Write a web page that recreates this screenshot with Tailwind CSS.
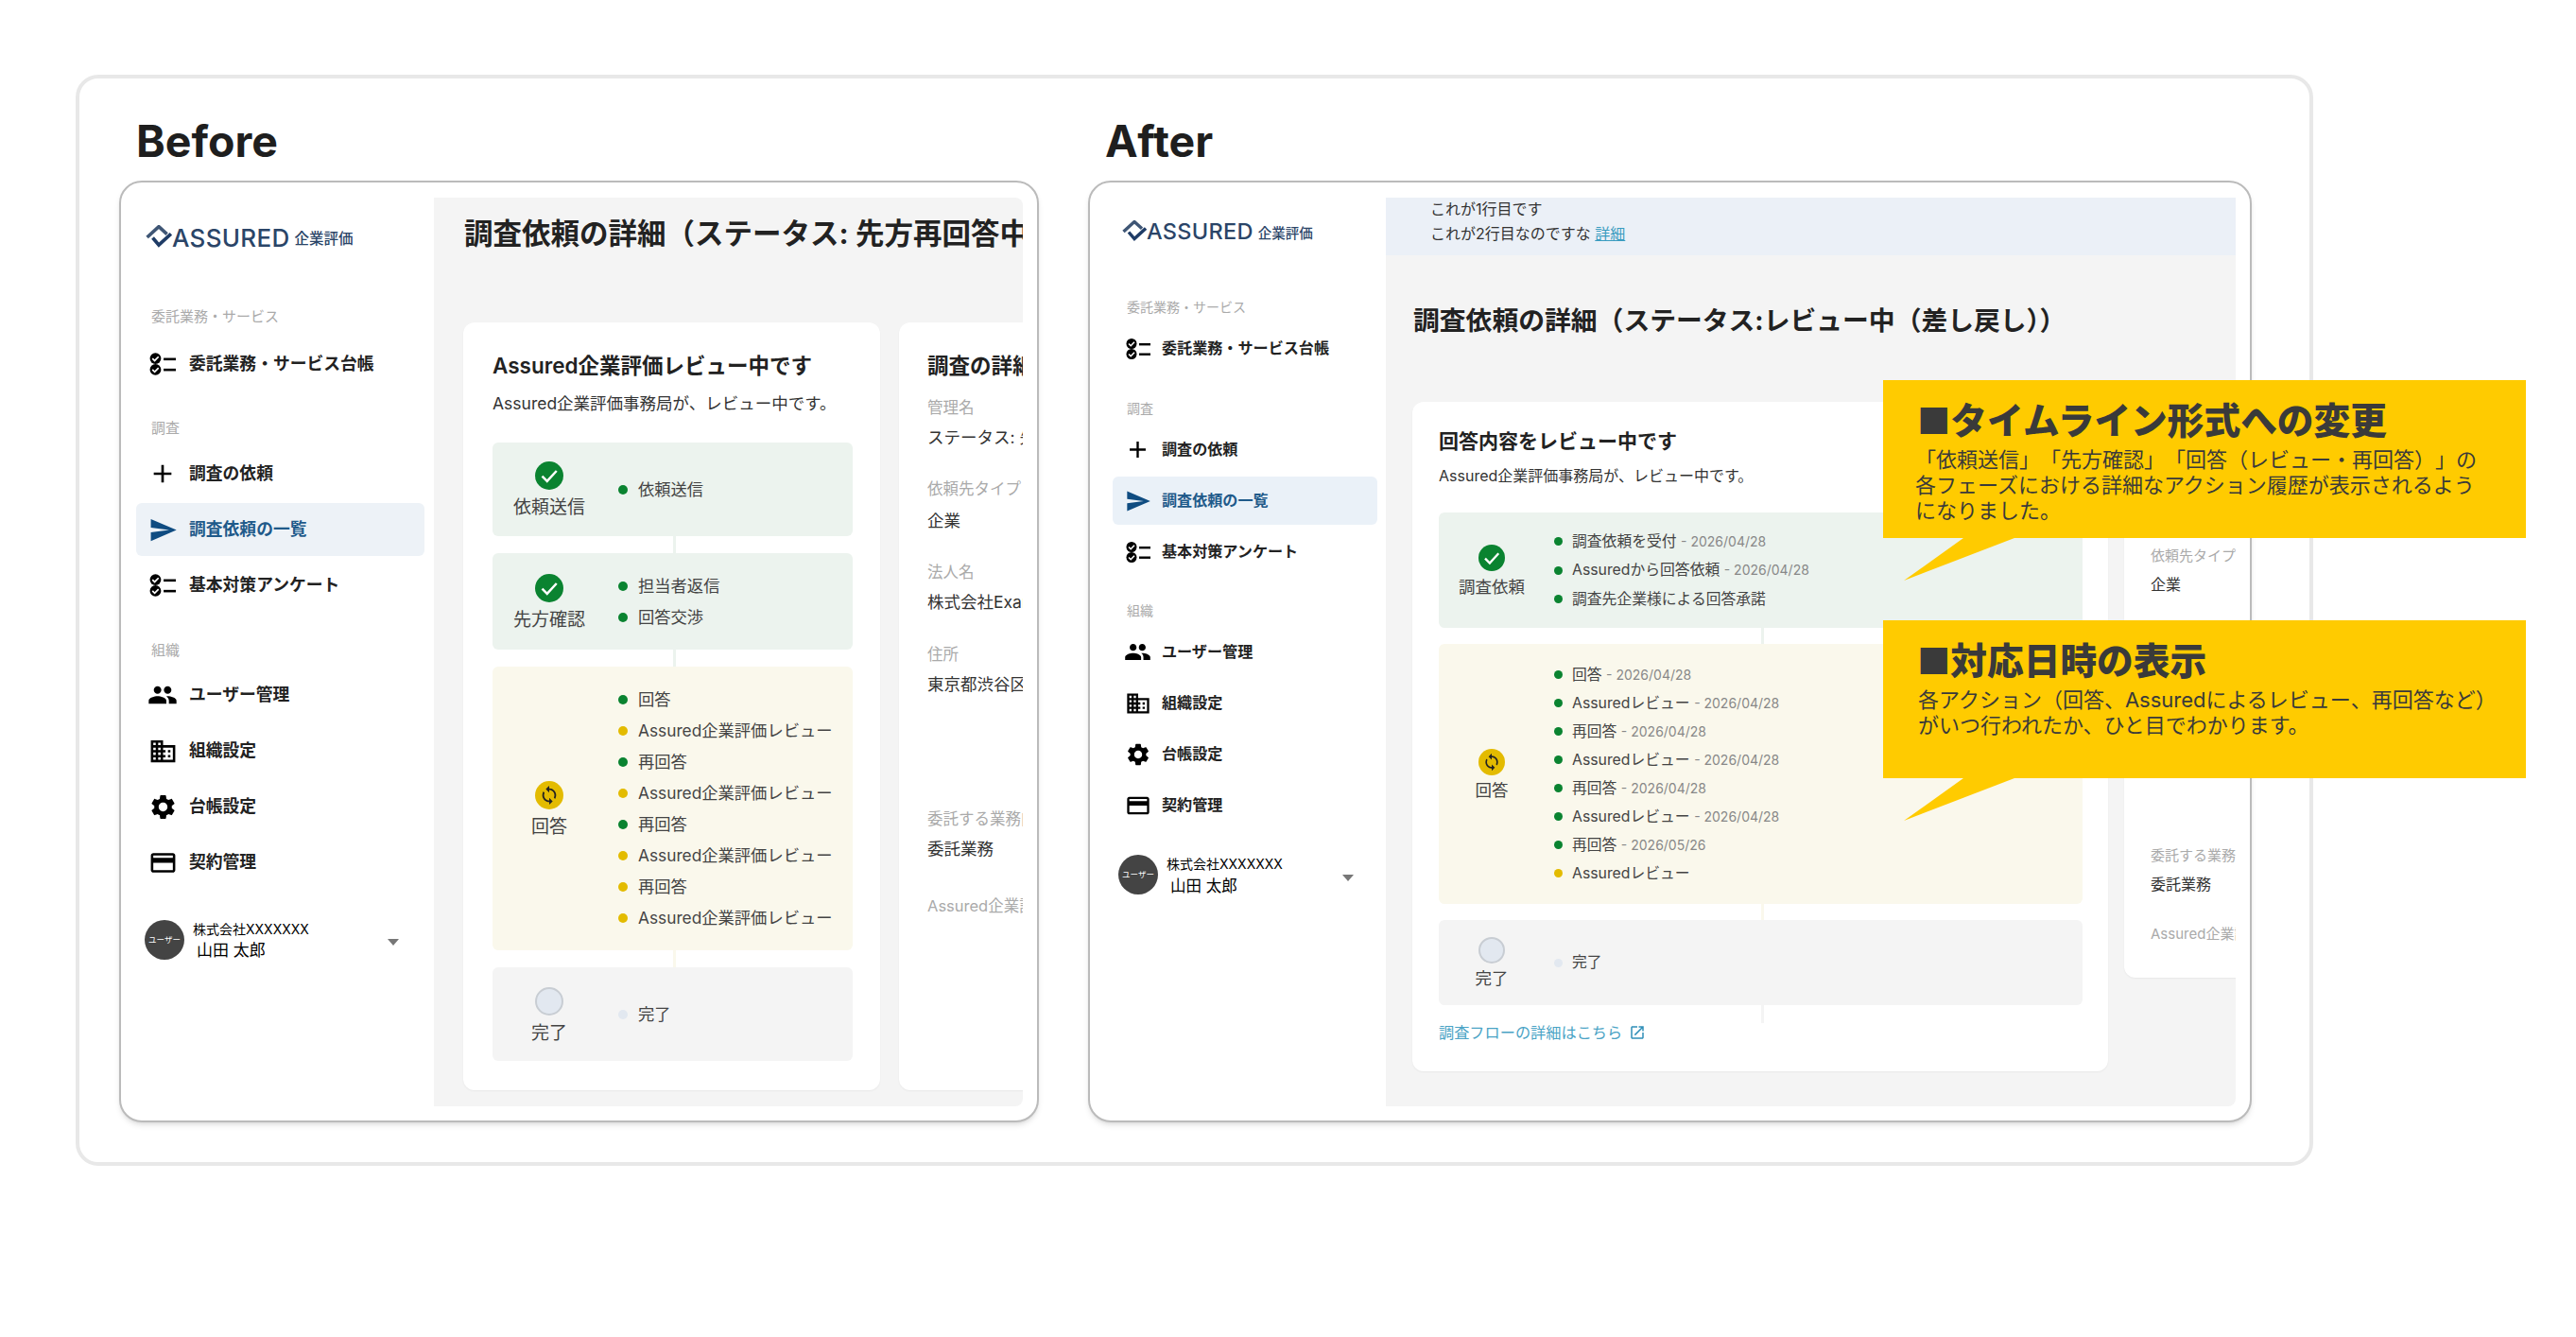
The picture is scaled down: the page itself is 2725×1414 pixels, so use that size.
<!DOCTYPE html>
<html lang="ja">
<head>
    <meta charset="UTF-8">
    <title>Before / After</title>
    <script src="https://cdn.jsdelivr.net/npm/@tailwindcss/browser@4"></script>
</head>
<body class="bg-white">
    <svg class="hidden">
        <symbol id="i-list" viewBox="0 0 26 24"><circle cx="6" cy="6.500" r="5.500"/><circle cx="6" cy="17.500" r="5.500"/><path d="M3 6.500l2.200 2.200L9 4.800M3 17.500l2.200 2.200L9 15.800" fill="none" stroke="#fff" stroke-width="1.600"/><rect x="14" y="6" width="12" height="2.400"/><rect x="14" y="16.500" width="12" height="2.400"/></symbol>
        <symbol id="i-add" viewBox="0 0 24 24"><path d="M19 13h-6v6h-2v-6H5v-2h6V5h2v6h6v2z"/></symbol>
        <symbol id="i-send" viewBox="0 0 24 24"><path d="M2.010 21 23 12 2.010 3 2 10l15 2-15 2z"/></symbol>
        <symbol id="i-people" viewBox="0 0 24 24"><path d="M16 11c1.660 0 2.990-1.340 2.990-3S17.660 5 16 5c-1.660 0-3 1.340-3 3s1.340 3 3 3zm-8 0c1.660 0 2.990-1.340 2.990-3S9.660 5 8 5C6.340 5 5 6.340 5 8s1.340 3 3 3zm0 2c-2.330 0-7 1.170-7 3.500V19h14v-2.500c0-2.330-4.670-3.500-7-3.500zm8 0c-.29 0-.62.02-.97.05 1.160.84 1.970 1.970 1.970 3.450V19h6v-2.500c0-2.330-4.670-3.500-7-3.500z"/></symbol>
        <symbol id="i-domain" viewBox="0 0 24 24"><path d="M12 7V3H2v18h20V7H12zM6 19H4v-2h2v2zm0-4H4v-2h2v2zm0-4H4V9h2v2zm0-4H4V5h2v2zm4 12H8v-2h2v2zm0-4H8v-2h2v2zm0-4H8V9h2v2zm0-4H8V5h2v2zm10 12h-8v-2h2v-2h-2v-2h2v-2h-2V9h8v10zm-2-8h-2v2h2v-2zm0 4h-2v2h2v-2z"/></symbol>
        <symbol id="i-gear" viewBox="0 0 24 24"><path d="M19.140 12.940c.04-.3.06-.61.06-.94 0-.32-.02-.64-.07-.94l2.030-1.580c.18-.14.23-.41.12-.61l-1.920-3.320c-.12-.22-.37-.29-.59-.22l-2.390.96c-.5-.38-1.030-.7-1.620-.94l-.36-2.540c-.04-.24-.24-.41-.48-.41h-3.840c-.24 0-.43.17-.47.41l-.36 2.540c-.59.24-1.130.57-1.620.94l-2.390-.96c-.22-.08-.47 0-.59.22L2.740 8.870c-.12.21-.08.47.12.61l2.030 1.580c-.05.3-.09.63-.09.94s.02.64.07.94l-2.030 1.580c-.18.14-.23.41-.12.61l1.920 3.320c.12.22.37.29.59.22l2.390-.96c.5.38 1.030.7 1.620.94l.36 2.540c.05.24.24.41.48.41h3.840c.24 0 .44-.17.47-.41l.36-2.540c.59-.24 1.130-.56 1.620-.94l2.390.96c.22.08.47 0 .59-.22l1.920-3.320c.12-.22.07-.47-.12-.61l-2.010-1.580zM12 15.600c-1.980 0-3.600-1.620-3.600-3.600s1.620-3.600 3.600-3.600 3.600 1.620 3.600 3.600-1.620 3.600-3.600 3.600z"/></symbol>
        <symbol id="i-card" viewBox="0 0 24 24"><path d="M20 4H4c-1.110 0-1.990.89-1.990 2L2 18c0 1.110.89 2 2 2h16c1.110 0 2-.89 2-2V6c0-1.110-.89-2-2-2zm0 14H4v-6h16v6zm0-10H4V6h16v2z"/></symbol>
        <symbol id="i-sync" viewBox="0 0 24 24"><path d="M12 4V1L8 5l4 4V6c3.310 0 6 2.690 6 6 0 1.010-.25 1.970-.7 2.800l1.460 1.460C19.540 15.030 20 13.570 20 12c0-4.420-3.580-8-8-8zm0 14c-3.310 0-6-2.690-6-6 0-1.010.25-1.970.7-2.800L5.240 7.740C4.460 8.970 4 10.430 4 12c0 4.420 3.580 8 8 8v3l4-4-4-4v3z"/></symbol>
        <symbol id="i-check" viewBox="0 0 24 24"><path d="M6 12.500l4.200 4.200L18.200 8" fill="none" stroke="#fff" stroke-width="2"/></symbol>
        <symbol id="i-open" viewBox="0 0 24 24"><path d="M19 19H5V5h7V3H5c-1.110 0-2 .9-2 2v14c0 1.100.89 2 2 2h14c1.100 0 2-.9 2-2v-7h-2v7zM14 3v2h3.590l-9.830 9.830 1.410 1.410L19 6.410V10h2V3h-7z"/></symbol>
        <symbol id="i-logo" viewBox="0 0 26 24"><path d="M1.500 12 13 1.500l8 7.300" fill="none" stroke="#3f5675" stroke-width="3.400"/><path d="M7 12.500l6 7L25 8.500" fill="none" stroke="#1f3c66" stroke-width="3.400"/></symbol>
    </svg>

    <div class="relative w-[2725px] h-[1414px] overflow-hidden pt-[79px] pl-[80px] [font-family:Inter,'Noto_Sans_CJK_JP',sans-serif]">
        <!-- Outer frame -->
        <div class="flex gap-[52px] w-[2367px] h-[1154px] pl-[42px] border-4 border-[#e8e8e8] rounded-[24px]">

            <!-- Before -->
            <div class="w-[973px] shrink-0">
                <div class="h-[108px] pt-[25px] pl-[18px] flex items-center text-[46.500px] font-bold text-[#1e1e1e]">Before</div>
                <div class="flex w-[973px] h-[996px] bg-white border-2 border-[#bbbbbb] rounded-[24px] shadow-md">
                    <!-- Sidebar -->
                    <div class="w-[331px] shrink-0">
                        <div class="h-[120px] pb-[4px] pl-[26px] flex items-center text-[#2b4568]">
                            <svg class="w-[28px] h-[26px]"><use href="#i-logo"/></svg>
                            <span class="text-[26px] font-medium tracking-[0.300px]">ASSURED</span>
                            <span class="ml-[5px] mt-[3px] text-[15.500px] font-medium">企業評価</span>
                        </div>
                        <div class="h-[44px] pl-[32px] flex items-center text-[15px] text-[#aaaaaa]">委託業務・サービス</div>
                        <div class="ml-[16px] w-[305px] h-[56px] pl-[15px] flex items-center gap-[15px] rounded-md text-[17.800px] font-semibold text-[#222222]">
                            <span class="w-[26px] flex justify-center"><svg class="w-[28px] h-[28px] shrink-0 fill-black"><use href="#i-list"/></svg></span>委託業務・サービス台帳
                        </div>
                        <div class="h-[60px] pt-[20px] pl-[32px] flex items-center text-[15px] text-[#aaaaaa]">調査</div>
                        <div class="flex flex-col gap-[3px] ml-[16px] w-[305px] text-[17.800px] font-semibold text-[#222222]">
                            <div class="h-[56px] pl-[15px] flex items-center gap-[15px] rounded-md">
                                <span class="w-[26px] flex justify-center"><svg class="w-[32px] h-[32px] shrink-0 fill-black"><use href="#i-add"/></svg></span>調査の依頼
                            </div>
                            <div class="h-[56px] pl-[15px] flex items-center gap-[15px] rounded-md bg-[#edf2f7] text-[#1f5a8a]">
                                <span class="w-[26px] flex justify-center"><svg class="w-[31px] h-[31px] shrink-0 fill-[#0f4c81]"><use href="#i-send"/></svg></span>調査依頼の一覧
                            </div>
                            <div class="h-[56px] pl-[15px] flex items-center gap-[15px] rounded-md">
                                <span class="w-[26px] flex justify-center"><svg class="w-[28px] h-[28px] shrink-0 fill-black"><use href="#i-list"/></svg></span>基本対策アンケート
                            </div>
                        </div>
                        <div class="h-[60px] pt-[22px] pl-[32px] flex items-center text-[15px] text-[#aaaaaa]">組織</div>
                        <div class="flex flex-col gap-[3px] ml-[16px] w-[305px] text-[17.800px] font-semibold text-[#222222]">
                            <div class="h-[56px] pl-[15px] flex items-center gap-[15px]">
                                <span class="w-[26px] flex justify-center"><svg class="w-[32px] h-[32px] shrink-0 fill-black"><use href="#i-people"/></svg></span>ユーザー管理
                            </div>
                            <div class="h-[56px] pl-[15px] flex items-center gap-[15px]">
                                <span class="w-[26px] flex justify-center"><svg class="w-[31px] h-[31px] shrink-0 fill-black"><use href="#i-domain"/></svg></span>組織設定
                            </div>
                            <div class="h-[56px] pl-[15px] flex items-center gap-[15px]">
                                <span class="w-[26px] flex justify-center"><svg class="w-[31px] h-[31px] shrink-0 fill-black"><use href="#i-gear"/></svg></span>台帳設定
                            </div>
                            <div class="h-[56px] pl-[15px] flex items-center gap-[15px]">
                                <span class="w-[26px] flex justify-center"><svg class="w-[31px] h-[31px] shrink-0 fill-black"><use href="#i-card"/></svg></span>契約管理
                            </div>
                        </div>
                        <div class="mt-[24px] h-[60px] pl-[25px] flex items-center">
                            <div class="w-[42px] h-[42px] shrink-0 rounded-full bg-[#444444] flex items-center justify-center text-[8.500px] text-white">ユーザー</div>
                            <div class="w-[206px] ml-[9px] text-black">
                                <div class="h-[24px] flex items-center text-[14px]">株式会社XXXXXXX</div>
                                <div class="h-[24px] pl-[4px] flex items-center text-[17px]">山田 太郎</div>
                            </div>
                            <div class="w-0 h-0 mt-[4px] border-x-[6px] border-x-transparent border-t-[7px] border-t-[#777777]"></div>
                        </div>
                    </div>
                    <!-- Main -->
                    <div class="mt-[16px] mb-[15px] w-[623px] shrink-0 bg-[#f4f4f4] rounded-tr-lg rounded-br-lg overflow-hidden whitespace-nowrap">
                        <div class="h-[76px] pl-[32px] flex items-center text-[30.500px] font-bold text-[#222222]">調査依頼の詳細（ステータス: 先方再回答中</div>
                        <div class="mt-[56px] pl-[31px] flex gap-[20px]">
                            <div class="w-[441px] h-[812px] shrink-0 bg-white rounded-xl shadow-xs px-[31px] pt-[30px]">
                                <div class="h-[32px] flex items-center text-[22.500px] font-semibold text-[#222222]">Assured企業評価レビュー中です</div>
                                <div class="mt-[8px] h-[32px] flex items-center text-[17.500px] text-[#333333]">Assured企業評価事務局が、レビュー中です。</div>
                                <div class="mt-[25px] w-[381px] text-[17.300px] text-[#444444]">
                                    <div class="h-[99px] flex bg-[#ecf3ee] rounded-md">
                                        <div class="w-[120px] pt-[20px] flex flex-col items-center">
                                            <svg class="w-[30px] h-[30px] rounded-full bg-[#0a8330]"><use href="#i-check"/></svg>
                                            <div class="mt-[6px] h-[26px] flex items-center text-[19px]">依頼送信</div>
                                        </div>
                                        <div class="ml-[13px] flex flex-col justify-center">
                                            <div class="h-[33px] flex items-center gap-[11px]"><span class="w-[10px] h-[10px] rounded-full bg-[#0a8330]"></span>依頼送信</div>
                                        </div>
                                    </div>
                                    <div class="ml-[191px] w-[3px] h-[18px] bg-[#ecf3ee]"></div>
                                    <div class="h-[102px] flex bg-[#ecf3ee] rounded-md">
                                        <div class="w-[120px] pt-[22px] flex flex-col items-center">
                                            <svg class="w-[30px] h-[30px] rounded-full bg-[#0a8330]"><use href="#i-check"/></svg>
                                            <div class="mt-[6px] h-[26px] flex items-center text-[19px]">先方確認</div>
                                        </div>
                                        <div class="ml-[13px] flex flex-col justify-center">
                                            <div class="h-[33px] flex items-center gap-[11px]"><span class="w-[10px] h-[10px] rounded-full bg-[#0a8330]"></span>担当者返信</div>
                                            <div class="h-[33px] flex items-center gap-[11px]"><span class="w-[10px] h-[10px] rounded-full bg-[#0a8330]"></span>回答交渉</div>
                                        </div>
                                    </div>
                                    <div class="ml-[191px] w-[3px] h-[18px] bg-[#ecf3ee]"></div>
                                    <div class="h-[300px] flex bg-[#faf8ec] rounded-md">
                                        <div class="w-[120px] pt-[121px] flex flex-col items-center">
                                            <svg class="w-[30px] h-[30px] p-[4px] rounded-full bg-[#e3bb00] fill-[#222222]"><use href="#i-sync"/></svg>
                                            <div class="mt-[6px] h-[26px] flex items-center text-[19px]">回答</div>
                                        </div>
                                        <div class="ml-[13px] flex flex-col justify-center">
                                            <div class="h-[33px] flex items-center gap-[11px]"><span class="w-[10px] h-[10px] rounded-full bg-[#0a8330]"></span>回答</div>
                                            <div class="h-[33px] flex items-center gap-[11px]"><span class="w-[10px] h-[10px] rounded-full bg-[#e3bb00]"></span>Assured企業評価レビュー</div>
                                            <div class="h-[33px] flex items-center gap-[11px]"><span class="w-[10px] h-[10px] rounded-full bg-[#0a8330]"></span>再回答</div>
                                            <div class="h-[33px] flex items-center gap-[11px]"><span class="w-[10px] h-[10px] rounded-full bg-[#e3bb00]"></span>Assured企業評価レビュー</div>
                                            <div class="h-[33px] flex items-center gap-[11px]"><span class="w-[10px] h-[10px] rounded-full bg-[#0a8330]"></span>再回答</div>
                                            <div class="h-[33px] flex items-center gap-[11px]"><span class="w-[10px] h-[10px] rounded-full bg-[#e3bb00]"></span>Assured企業評価レビュー</div>
                                            <div class="h-[33px] flex items-center gap-[11px]"><span class="w-[10px] h-[10px] rounded-full bg-[#e3bb00]"></span>再回答</div>
                                            <div class="h-[33px] flex items-center gap-[11px]"><span class="w-[10px] h-[10px] rounded-full bg-[#e3bb00]"></span>Assured企業評価レビュー</div>
                                        </div>
                                    </div>
                                    <div class="ml-[191px] w-[3px] h-[18px] bg-[#faf8ec]"></div>
                                    <div class="h-[99px] flex bg-[#f4f4f4] rounded-md">
                                        <div class="w-[120px] pt-[21px] flex flex-col items-center">
                                            <div class="w-[30px] h-[30px] rounded-full bg-[#e2e8f0] border-2 border-[#c8cdd3]"></div>
                                            <div class="mt-[6px] h-[26px] flex items-center text-[19px]">完了</div>
                                        </div>
                                        <div class="ml-[13px] flex flex-col justify-center">
                                            <div class="h-[33px] flex items-center gap-[11px]"><span class="w-[10px] h-[10px] rounded-full bg-[#e2e8f0]"></span>完了</div>
                                        </div>
                                    </div>
                                </div>
                            </div>
                            <div class="w-[400px] h-[812px] shrink-0 bg-white rounded-xl shadow-xs pl-[30px] pt-[30px] text-[17.500px] text-[#333333]">
                                <div class="h-[32px] flex items-center text-[22.500px] font-semibold text-[#222222]">調査の詳細</div>
                                <div class="mt-[13px] h-[31px] flex items-center text-[16.500px] text-[#aaaaaa]">管理名</div>
                                <div class="h-[32px] flex items-center">ステータス: 先方再回答中</div>
                                <div class="mt-[22px] h-[32px] flex items-center text-[16.500px] text-[#aaaaaa]">依頼先タイプ</div>
                                <div class="mt-[2px] h-[32px] flex items-center">企業</div>
                                <div class="mt-[22px] h-[32px] flex items-center text-[16.500px] text-[#aaaaaa]">法人名</div>
                                <div class="h-[32px] flex items-center">株式会社Example</div>
                                <div class="mt-[23px] h-[32px] flex items-center text-[16.500px] text-[#aaaaaa]">住所</div>
                                <div class="h-[32px] flex items-center">東京都渋谷区</div>
                                <div class="mt-[110px] h-[32px] flex items-center text-[16.500px] text-[#aaaaaa]">委託する業務内容</div>
                                <div class="h-[32px] flex items-center">委託業務</div>
                                <div class="mt-[28px] h-[32px] flex items-center text-[16.500px] text-[#aaaaaa]">Assured企業評価</div>
                            </div>
                        </div>
                    </div>
                </div>
            </div>

            <!-- After -->
            <div class="w-[1231px] shrink-0">
                <div class="h-[108px] pt-[25px] pl-[18px] flex items-center text-[46.500px] font-bold text-[#1e1e1e]">After</div>
                <div class="flex w-[1231px] h-[996px] bg-white border-2 border-[#bbbbbb] rounded-[24px] shadow-md">
                    <!-- Sidebar -->
                    <div class="w-[313px] shrink-0">
                        <div class="h-[112px] pb-[8px] pl-[34px] flex items-center text-[#2b4568]">
                            <svg class="w-[26px] h-[24px]"><use href="#i-logo"/></svg>
                            <span class="text-[23.500px] font-medium tracking-[0.300px]">ASSURED</span>
                            <span class="ml-[5px] mt-[3px] text-[14.500px] font-medium">企業評価</span>
                        </div>
                        <div class="h-[38px] pl-[39px] flex items-center text-[14px] text-[#aaaaaa]">委託業務・サービス</div>
                        <div class="ml-[24px] w-[280px] h-[51px] pl-[15px] flex items-center gap-[14px] text-[16.100px] font-semibold text-[#222222]">
                            <span class="w-[23px] flex justify-center"><svg class="w-[26px] h-[26px] shrink-0 fill-black"><use href="#i-list"/></svg></span>委託業務・サービス台帳
                        </div>
                        <div class="h-[56px] pt-[18px] pl-[39px] flex items-center text-[14px] text-[#aaaaaa]">調査</div>
                        <div class="flex flex-col gap-[3px] ml-[24px] w-[280px] text-[16.100px] font-semibold text-[#222222]">
                            <div class="h-[51px] pl-[15px] flex items-center gap-[14px] rounded-md">
                                <span class="w-[23px] flex justify-center"><svg class="w-[29px] h-[29px] shrink-0 fill-black"><use href="#i-add"/></svg></span>調査の依頼
                            </div>
                            <div class="h-[51px] pl-[15px] flex items-center gap-[14px] rounded-md bg-[#eaf1f8] text-[#1f5a8a]">
                                <span class="w-[23px] flex justify-center"><svg class="w-[28px] h-[28px] shrink-0 fill-[#0f4c81]"><use href="#i-send"/></svg></span>調査依頼の一覧
                            </div>
                            <div class="h-[51px] pl-[15px] flex items-center gap-[14px] rounded-md">
                                <span class="w-[23px] flex justify-center"><svg class="w-[26px] h-[26px] shrink-0 fill-black"><use href="#i-list"/></svg></span>基本対策アンケート
                            </div>
                        </div>
                        <div class="h-[55px] pt-[17px] pl-[39px] flex items-center text-[14px] text-[#aaaaaa]">組織</div>
                        <div class="flex flex-col gap-[3px] ml-[24px] w-[280px] text-[16.100px] font-semibold text-[#222222]">
                            <div class="h-[51px] pl-[15px] flex items-center gap-[14px]">
                                <span class="w-[23px] flex justify-center"><svg class="w-[29px] h-[29px] shrink-0 fill-black"><use href="#i-people"/></svg></span>ユーザー管理
                            </div>
                            <div class="h-[51px] pl-[15px] flex items-center gap-[14px]">
                                <span class="w-[23px] flex justify-center"><svg class="w-[28px] h-[28px] shrink-0 fill-black"><use href="#i-domain"/></svg></span>組織設定
                            </div>
                            <div class="h-[51px] pl-[15px] flex items-center gap-[14px]">
                                <span class="w-[23px] flex justify-center"><svg class="w-[28px] h-[28px] shrink-0 fill-black"><use href="#i-gear"/></svg></span>台帳設定
                            </div>
                            <div class="h-[51px] pl-[15px] flex items-center gap-[14px]">
                                <span class="w-[23px] flex justify-center"><svg class="w-[28px] h-[28px] shrink-0 fill-black"><use href="#i-card"/></svg></span>契約管理
                            </div>
                        </div>
                        <div class="mt-[18px] h-[60px] pl-[30px] flex items-center">
                            <div class="w-[42px] h-[42px] shrink-0 rounded-full bg-[#444444] flex items-center justify-center text-[8.500px] text-white">ユーザー</div>
                            <div class="w-[186px] ml-[9px] text-black">
                                <div class="h-[24px] flex items-center text-[14px]">株式会社XXXXXXX</div>
                                <div class="h-[24px] pl-[4px] flex items-center text-[16.500px]">山田 太郎</div>
                            </div>
                            <div class="w-0 h-0 mt-[6px] border-x-[6px] border-x-transparent border-t-[7px] border-t-[#777777]"></div>
                        </div>
                    </div>
                    <!-- Main -->
                    <div class="mt-[16px] mb-[15px] w-[899px] shrink-0 bg-[#f4f4f4] rounded-br-lg overflow-hidden whitespace-nowrap">
                        <div class="h-[61px] pl-[47px] bg-[#ebf0f7] text-[16px] text-[#333333]">
                            <div class="h-[24px] flex items-center">これが1行目です</div>
                            <div class="h-[28px] flex items-center">これが2行目なのですな&nbsp;<a href="#" class="text-[#3a9cc0] underline">詳細</a></div>
                        </div>
                        <div class="mt-[40px] h-[60px] pl-[29px] flex items-center text-[27.800px] font-bold text-[#222222]">調査依頼の詳細（ステータス:レビュー中（差し戻し））</div>
                        <div class="mt-[55px] pl-[28px] flex gap-[17px]">
                            <div class="w-[736px] h-[708px] shrink-0 bg-white rounded-xl shadow-xs px-[28px] pt-[27px]">
                                <div class="h-[30px] flex items-center text-[21px] font-semibold text-[#222222]">回答内容をレビュー中です</div>
                                <div class="mt-[6px] h-[30px] flex items-center text-[16px] text-[#333333]">Assured企業評価事務局が、レビュー中です。</div>
                                <div class="mt-[24px] w-[681px] text-[15.800px] text-[#444444]">
                                    <div class="h-[122px] flex bg-[#ecf3ee] rounded-md">
                                        <div class="w-[112px] pt-[34px] flex flex-col items-center">
                                            <svg class="w-[28px] h-[28px] rounded-full bg-[#0a8330]"><use href="#i-check"/></svg>
                                            <div class="mt-[4px] h-[26px] flex items-center text-[17.500px]">調査依頼</div>
                                        </div>
                                        <div class="ml-[10px] flex flex-col justify-center">
                                            <div class="h-[30.500px] flex items-center gap-[10px]"><span class="w-[9px] h-[9px] rounded-full bg-[#0a8330]"></span><span>調査依頼を受付 <span class="text-[14px] text-[#888888]">- 2026/04/28</span></span></div>
                                            <div class="h-[30.500px] flex items-center gap-[10px]"><span class="w-[9px] h-[9px] rounded-full bg-[#0a8330]"></span><span>Assuredから回答依頼 <span class="text-[14px] text-[#888888]">- 2026/04/28</span></span></div>
                                            <div class="h-[30.500px] flex items-center gap-[10px]"><span class="w-[9px] h-[9px] rounded-full bg-[#0a8330]"></span>調査先企業様による回答承諾</div>
                                        </div>
                                    </div>
                                    <div class="ml-[341px] w-[3px] h-[17px] bg-[#ecf3ee]"></div>
                                    <div class="h-[275px] flex bg-[#faf8ec] rounded-md">
                                        <div class="w-[112px] pt-[111px] flex flex-col items-center">
                                            <svg class="w-[28px] h-[28px] p-[4px] rounded-full bg-[#e3bb00] fill-[#222222]"><use href="#i-sync"/></svg>
                                            <div class="mt-[3px] h-[26px] flex items-center text-[17.500px]">回答</div>
                                        </div>
                                        <div class="ml-[10px] flex flex-col justify-center">
                                            <div class="h-[30px] flex items-center gap-[10px]"><span class="w-[9px] h-[9px] rounded-full bg-[#0a8330]"></span><span>回答 <span class="text-[14px] text-[#888888]">- 2026/04/28</span></span></div>
                                            <div class="h-[30px] flex items-center gap-[10px]"><span class="w-[9px] h-[9px] rounded-full bg-[#0a8330]"></span><span>Assuredレビュー <span class="text-[14px] text-[#888888]">- 2026/04/28</span></span></div>
                                            <div class="h-[30px] flex items-center gap-[10px]"><span class="w-[9px] h-[9px] rounded-full bg-[#0a8330]"></span><span>再回答 <span class="text-[14px] text-[#888888]">- 2026/04/28</span></span></div>
                                            <div class="h-[30px] flex items-center gap-[10px]"><span class="w-[9px] h-[9px] rounded-full bg-[#0a8330]"></span><span>Assuredレビュー <span class="text-[14px] text-[#888888]">- 2026/04/28</span></span></div>
                                            <div class="h-[30px] flex items-center gap-[10px]"><span class="w-[9px] h-[9px] rounded-full bg-[#0a8330]"></span><span>再回答 <span class="text-[14px] text-[#888888]">- 2026/04/28</span></span></div>
                                            <div class="h-[30px] flex items-center gap-[10px]"><span class="w-[9px] h-[9px] rounded-full bg-[#0a8330]"></span><span>Assuredレビュー <span class="text-[14px] text-[#888888]">- 2026/04/28</span></span></div>
                                            <div class="h-[30px] flex items-center gap-[10px]"><span class="w-[9px] h-[9px] rounded-full bg-[#0a8330]"></span><span>再回答 <span class="text-[14px] text-[#888888]">- 2026/05/26</span></span></div>
                                            <div class="h-[30px] flex items-center gap-[10px]"><span class="w-[9px] h-[9px] rounded-full bg-[#e3bb00]"></span>Assuredレビュー</div>
                                        </div>
                                    </div>
                                    <div class="ml-[341px] w-[3px] h-[17px] bg-[#faf8ec]"></div>
                                    <div class="h-[90px] flex bg-[#f4f4f4] rounded-md">
                                        <div class="w-[112px] pt-[18px] flex flex-col items-center">
                                            <div class="w-[28px] h-[28px] rounded-full bg-[#e2e8f0] border-2 border-[#c8cdd3]"></div>
                                            <div class="mt-[3px] h-[26px] flex items-center text-[17.500px]">完了</div>
                                        </div>
                                        <div class="ml-[10px] flex flex-col justify-center">
                                            <div class="h-[30px] flex items-center gap-[10px]"><span class="w-[9px] h-[9px] rounded-full bg-[#e2e8f0]"></span>完了</div>
                                        </div>
                                    </div>
                                    <div class="ml-[341px] w-[3px] h-[19px] bg-[#f4f4f4]"></div>
                                    <a href="#" class="h-[20px] flex items-center gap-[7px] text-[16.200px] text-[#4aa3c5]">調査フローの詳細はこちら<svg class="w-[18px] h-[18px] fill-[#2f8fb8]"><use href="#i-open"/></svg></a>
                                </div>
                            </div>
                            <div class="w-[400px] h-[609px] shrink-0 bg-white rounded-xl shadow-xs pl-[28px] pt-[148px] text-[16px] text-[#333333]">
                                <div class="h-[30px] flex items-center text-[15px] text-[#aaaaaa]">依頼先タイプ</div>
                                <div class="h-[30px] flex items-center">企業</div>
                                <div class="mt-[257px] h-[30px] flex items-center text-[15px] text-[#aaaaaa]">委託する業務</div>
                                <div class="h-[30px] flex items-center">委託業務</div>
                                <div class="mt-[23px] h-[30px] flex items-center text-[15px] text-[#aaaaaa]">Assured企業評価</div>
                            </div>
                        </div>
                    </div>
                </div>
            </div>
        </div>

        <!-- Callouts -->
        <div class="absolute left-[1992px] top-[402px] w-[680px] h-[167px] bg-[#ffcb00] pl-[34px] pt-[20px] text-[#3a3a3a]">
            <div class="h-[46px] pl-[2px] flex items-center text-[38.700px] font-black whitespace-nowrap">■タイムライン形式への変更</div>
            <div class="mt-[5px] text-[22px] leading-[27px] whitespace-nowrap [text-spacing-trim:space-all]">「依頼送信」「先方確認」「回答（レビュー・再回答）」の<br>各フェーズにおける詳細なアクション履歴が表示されるよう<br>になりました。</div>
            <svg class="absolute left-[20px] top-[167px] w-[125px] h-[46px] fill-[#ffcb00]"><polygon points="65,0 2,45 119,0"/></svg>
        </div>
        <div class="absolute left-[1992px] top-[656px] w-[680px] h-[167px] bg-[#ffcb00] pl-[34px] pt-[20px] text-[#3a3a3a]">
            <div class="h-[46px] pl-[2px] flex items-center text-[38.700px] font-black whitespace-nowrap">■対応日時の表示</div>
            <div class="mt-[5px] pl-[3px] text-[22px] leading-[27px] whitespace-nowrap">各アクション（回答、Assuredによるレビュー、再回答など）<br>がいつ行われたか、ひと目でわかります。</div>
            <svg class="absolute left-[20px] top-[167px] w-[125px] h-[46px] fill-[#ffcb00]"><polygon points="65,0 2,45 119,0"/></svg>
        </div>
    </div>
</body>
</html>
